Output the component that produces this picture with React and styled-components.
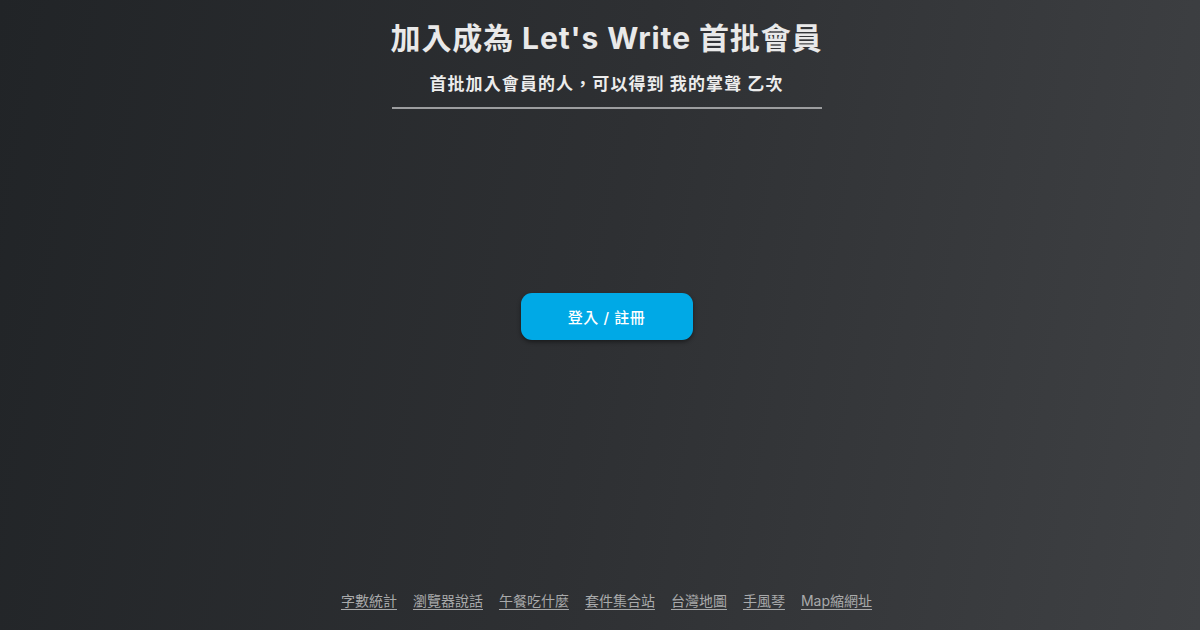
import React from "react";
import styled, { createGlobalStyle } from "styled-components";

const Global = createGlobalStyle`
  html, body { margin: 0; padding: 0; height: 100%; }
  body {
    font-family: Inter, "Noto Sans CJK TC", "Noto Sans", sans-serif;
    background: #2c2e31;
  }
  #root { height: 100%; }
`;

const Page = styled.div`
  height: 630px;
  width: 100%;
  box-sizing: border-box;
  padding-left: 13px;
  display: flex;
  flex-direction: column;
  align-items: center;
  background: linear-gradient(100deg, #212427 0%, #2e3033 50%, #3f4144 100%);
  color: #eee;
`;

const Header = styled.header`
  width: 430px;
  margin-top: 18px;
  display: flex;
  flex-direction: column;
  align-items: center;
  border-bottom: 2px solid #9c9d9f;
  padding-bottom: 12px;
`;

const Title = styled.h1`
  margin: 0;
  font-size: 30px;
  font-weight: 700;
  line-height: 40px;
  letter-spacing: 0.9px;
  color: #e9e9e9;
  white-space: nowrap;
`;

const Subtitle = styled.p`
  margin: 15px 0 0;
  font-size: 17px;
  font-weight: 700;
  line-height: 22px;
  letter-spacing: 1.1px;
  color: #ececec;
  white-space: nowrap;
`;

const Main = styled.main`
  flex: 1;
  display: flex;
  align-items: center;
  justify-content: center;
  padding-bottom: 68px;
`;

const Button = styled.button`
  width: 172px;
  height: 47px;
  border: none;
  border-radius: 11px;
  background: #00a9e6;
  color: #fff;
  font-family: inherit;
  font-size: 15px;
  font-weight: 500;
  letter-spacing: 0.6px;
  box-shadow: 0 2px 4px rgba(0, 0, 0, 0.45);
  cursor: pointer;
`;

const Footer = styled.footer`
  display: flex;
  gap: 16px;
  padding-bottom: 19px;
`;

const FootLink = styled.a`
  font-size: 14px;
  line-height: 20px;
  color: #a9aaab;
  text-decoration: underline;
  text-underline-offset: 3px;
  cursor: pointer;
`;

const links = ["字數統計", "瀏覽器說話", "午餐吃什麼", "套件集合站", "台灣地圖", "手風琴", "Map縮網址"];

export default function App() {
  return (
    <>
      <Global />
      <Page>
        <Header>
          <Title>加入成為 Let's Write 首批會員</Title>
          <Subtitle>首批加入會員的人，可以得到 我的掌聲 乙次</Subtitle>
        </Header>
        <Main>
          <Button>登入 / 註冊</Button>
        </Main>
        <Footer>
          {links.map((l) => (
            <FootLink key={l}>{l}</FootLink>
          ))}
        </Footer>
      </Page>
    </>
  );
}
